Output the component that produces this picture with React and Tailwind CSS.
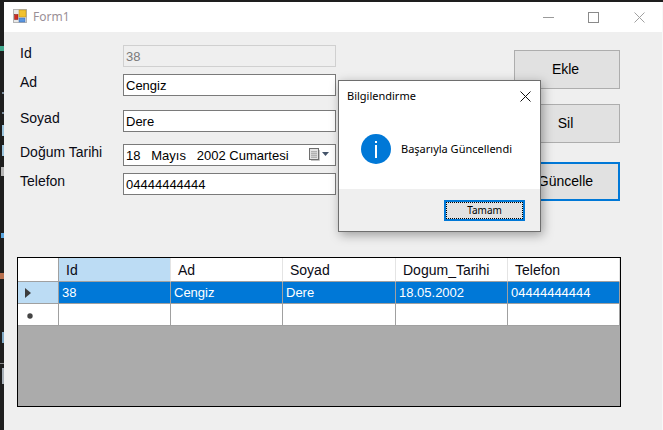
import React from 'react';

const fieldRows = [
  { label: 'Ad', value: 'Cengiz', mt: 'mt-[7px]' },
  { label: 'Soyad', value: 'Dere', mt: 'mt-[14px]' },
];

const columns = ['Id', 'Ad', 'Soyad', 'Dogum_Tarihi', 'Telefon'];
const rowValues = ['38', 'Cengiz', 'Dere', '18.05.2002', '04444444444'];
const gridCols = 'grid grid-cols-[41px_112px_112px_113px_112px_112px]';

const FormIcon = () => (
  <svg width="14" height="14" viewBox="0 0 14 14" className="shrink-0 mb-[2px]">
    <rect x="0.5" y="0.5" width="13" height="13" fill="#e8e8e8" stroke="#b5b5b5" />
    <rect x="1.5" y="5.5" width="3.5" height="5" fill="#d12a20" stroke="#7a1a14" strokeWidth="0.5" />
    <rect x="6" y="1" width="7" height="7" fill="#f2c230" stroke="#b58a1a" strokeWidth="0.5" />
    <rect x="6" y="9" width="6" height="4" fill="#5a96e0" stroke="#3a6ab0" strokeWidth="0.5" />
  </svg>
);

const CalendarIcon = () => (
  <svg width="20" height="14" viewBox="0 0 20 14" className="shrink-0">
    <rect x="0.5" y="0.5" width="9" height="11" fill="#e4e4e4" stroke="#6e6e6e" />
    <path d="M10.5 2v10.5H2" fill="none" stroke="#c4c4c4" />
    <path d="M2 3.5h6M2 5.5h6M2 7.5h6M2 9.5h6M3 3v7M5 3v7M7 3v7" stroke="#a9a9a9" strokeWidth="0.8" />
    <path d="M13 4h7l-3.5 4z" fill="#44546a" />
  </svg>
);

const Input = ({ value }) => (
  <div className="w-[213px] h-[22px] border border-[#7a7a7a] bg-white pl-[2px] flex items-center text-[13px] leading-none text-black">
    {value}
  </div>
);

const Label = ({ children }) => (
  <div className="w-[103px] pb-[6px] text-[14px] leading-none text-[#0a0a14]">{children}</div>
);

const Button = ({ children, active, mt }) => (
  <div className={`w-[106px] h-[39px] flex items-center justify-center pr-[3px] bg-[#e1e1e1] text-[14px] text-black ${mt} ${active ? 'border-2 border-[#0078d7]' : 'border border-[#adadad]'}`}>
    {children}
  </div>
);

const App = () => {
  return (
    <div className="relative w-[663px] h-[430px] overflow-hidden bg-[#1e1e1e] pt-[2px] pl-[4px] font-['Liberation_Sans',sans-serif]">
      {/* code editor peeking out behind the window */}
      <div className="absolute left-0 top-[46px] w-[4px] h-[5px] bg-[#3fa88c]" />
      <div className="absolute left-[2px] top-[92px] w-[2px] h-[2px] bg-[#7a8a99]" />
      <div className="absolute left-[2px] top-[112px] w-[2px] h-[2px] bg-[#7a8a99]" />
      <div className="absolute left-[2px] top-[125px] w-[2px] h-[11px] bg-[#9cc4dc]" />
      <div className="absolute left-[2px] top-[145px] w-[2px] h-[11px] bg-[#9cc4dc]" />
      <div className="absolute left-[1px] top-[167px] w-[3px] h-[9px] bg-[#b5b5b5]" />
      <div className="absolute left-[1px] top-[233px] w-[3px] h-[5px] bg-[#5aa6e0]" />
      <div className="absolute left-0 top-[273px] w-[4px] h-[6px] bg-[#b8704e]" />
      <div className="absolute left-[2px] top-[332px] w-[2px] h-[11px] bg-[#7fa8c4]" />
      <div className="absolute left-0 top-[363px] w-[4px] h-px bg-[#8a8a8a]" />
      <div className="absolute left-[2px] top-[368px] w-[2px] h-[16px] bg-[#a8b0b8]" />

      <div className="w-[659px] h-[428px] bg-[#efefef] border-r border-[#f8f8f8] flex flex-col">
        {/* Title bar */}
        <div className="h-[30px] bg-white flex items-center pl-[9px] shrink-0">
          <FormIcon />
          <span className="ml-[6px] text-[12px] text-[#9a8f96] font-['Noto_Sans',sans-serif]">Form1</span>
          <div className="ml-auto flex items-center pr-[17px]">
            <svg width="11" height="1" className="mr-[34px]"><rect width="11" height="1" fill="#9a9a9a" /></svg>
            <svg width="11" height="11" className="mr-[35px]"><rect x="0.5" y="0.5" width="10" height="10" fill="none" stroke="#8a8a8a" /></svg>
            <svg width="11" height="11"><path d="M0.5 0.5l10 10M10.5 0.5l-10 10" stroke="#a0a0a0" fill="none" /></svg>
          </div>
        </div>

        {/* Form fields + buttons */}
        <div className="flex h-[225px] shrink-0 pl-[16px]">
          <div className="w-[316px] pt-[13px]">
            <div className="flex items-center">
              <Label>Id</Label>
              <div className="w-[213px] h-[22px] border border-[#d0d0d0] bg-[#efefef] pl-[2px] flex items-center text-[13px] leading-none text-[#7a7a7a]">38</div>
            </div>
            {fieldRows.map((row) => (
              <div key={row.label} className={`flex items-center ${row.mt}`}>
                <Label>{row.label}</Label>
                <Input value={row.value} />
              </div>
            ))}
            <div className="flex items-center mt-[12px]">
              <Label>Doğum Tarihi</Label>
              <div className="w-[213px] h-[22px] border border-[#7a7a7a] bg-white pl-[2px] pr-[6px] flex items-center text-[13px] leading-none text-black">
                <span className="whitespace-pre">18   Mayıs   2002 Cumartesi</span>
                <span className="ml-auto"><CalendarIcon /></span>
              </div>
            </div>
            <div className="flex items-center mt-[7px]">
              <Label>Telefon</Label>
              <Input value="04444444444" />
            </div>
          </div>
          <div className="ml-[178px] pt-[18px]">
            <Button>Ekle</Button>
            <Button mt="mt-[15px]">Sil</Button>
            <Button active mt="mt-[19px]">Güncelle</Button>
          </div>
        </div>

        {/* Data grid */}
        <div className="ml-[13px] w-[604px] h-[150px] border border-black bg-[#ababab] shrink-0">
          <div className={gridCols}>
            <div className="h-[24px] bg-white border-r border-b border-[#a0a0a0]" />
            {columns.map((name, i) => (
              <div
                key={name}
                className={`h-[24px] border-b border-b-[#a0a0a0] border-r border-r-[#e4e4e4] pl-[7px] flex items-center text-[14px] leading-none text-[#0a0a14] ${i === 0 ? 'bg-[#bcdcf4]' : 'bg-white'}`}
              >
                {name}
              </div>
            ))}

            <div className="h-[22px] bg-[#bcdcf4] border-r border-b border-[#a0a0a0] pl-[7px] flex items-center">
              <svg width="6" height="10"><path d="M0 0l6 5-6 5z" fill="#3c3c3c" /></svg>
            </div>
            {rowValues.map((value) => (
              <div key={value} className="h-[22px] bg-[#0078d7] border-r border-b border-[#a0a0a0] pl-[3px] flex items-center text-[13px] leading-none text-white">
                {value}
              </div>
            ))}

            <div className="h-[22px] bg-white border-r border-b border-[#a0a0a0] pl-[9px] pt-[2px] flex items-center">
              <svg width="6" height="6"><circle cx="3" cy="3" r="2.7" fill="#444" /></svg>
            </div>
            {columns.map((name) => (
              <div key={name} className="h-[22px] bg-white border-r border-b border-[#a0a0a0]" />
            ))}
          </div>
        </div>
      </div>

      {/* Message box */}
      <div className="absolute left-[338px] top-[80px] w-[203px] h-[152px] border border-[#6e6e6e] bg-white flex flex-col shadow-[2px_3px_10px_rgba(0,0,0,0.35)] font-['Noto_Sans',sans-serif]">
        <div className="h-[28px] flex items-center pl-[8px] pr-[9px] shrink-0 mt-px">
          <span className="text-[11px] text-black">Bilgilendirme</span>
          <svg width="11" height="11" className="ml-auto"><path d="M0.5 0.5l10 10M10.5 0.5l-10 10" stroke="#111" fill="none" /></svg>
        </div>
        <div className="flex-1 flex items-center pl-[22px] pb-[1px]">
          <svg width="30" height="30" viewBox="0 0 30 30" className="shrink-0">
            <circle cx="15" cy="15" r="15" fill="#0078d7" />
            <rect x="14" y="7" width="2" height="2" fill="#fff" />
            <rect x="14" y="11" width="2" height="13" fill="#fff" />
          </svg>
          <span className="ml-[10px] text-[11px] whitespace-nowrap text-black">Başarıyla Güncellendi</span>
        </div>
        <div className="h-[42px] bg-[#efefef] flex items-center justify-end pr-[15px] shrink-0">
          <div className="w-[81px] h-[21px] border-2 border-[#0078d7] bg-[#e1e1e1] outline-1 outline-dotted outline-black -outline-offset-3 flex items-center justify-center text-[10px] text-black">
            Tamam
          </div>
        </div>
      </div>
    </div>
  );
};

export default App;
